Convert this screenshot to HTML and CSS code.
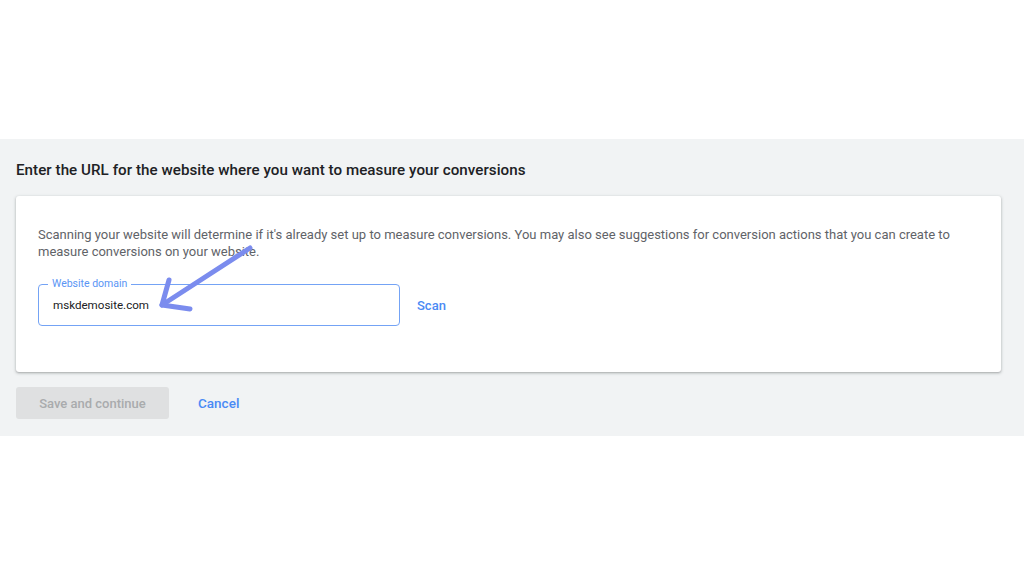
FILE: index.html
```html
<!DOCTYPE html>
<html>
<head>
<meta charset="utf-8">
<link rel="stylesheet" href="styles.css">
</head>
<body>
<div class="page">
  <div class="top-space"></div>
  <section class="band">
    <h2 class="title">Enter the URL for the website where you want to measure your conversions</h2>
    <div class="card">
      <p class="desc">Scanning your website will determine if it's already set up to measure conversions. You may also see suggestions for conversion actions that you can create to measure conversions on your website.</p>
      <div class="field-row">
        <div class="field">
          <span class="field-label">Website domain</span>
          <span class="field-value">mskdemosite.com</span>
        </div>
        <span class="scan">Scan</span>
      </div>
    </div>
    <div class="actions">
      <span class="btn-disabled">Save and continue</span>
      <span class="btn-text">Cancel</span>
    </div>
  </section>
  <svg class="arrow" width="1024" height="576" viewBox="0 0 1024 576">
    <g fill="none" stroke="#7b8cee" stroke-width="5" stroke-linecap="round" stroke-linejoin="round">
      <path d="M250 248 L162 305"/>
      <path d="M169 280 L162 305 L190 309"/>
    </g>
  </svg>
</div>
</body>
</html>
```

FILE: styles.css
```css
* { box-sizing: border-box; }
html, body { margin: 0; padding: 0; background: #fff; }
body { font-family: Roboto, "Noto Sans", "Liberation Sans", sans-serif; width: 1024px; height: 576px; overflow: hidden; }
.page { position: relative; width: 1024px; height: 576px; }
.top-space { height: 139px; }
.band {
  background: #f1f3f4;
  height: 297px;
  padding: 22px 23px 0 16px;
}
.title {
  margin: 0;
  font-size: 15.15px;
  font-weight: 500;
  color: #202124;
  line-height: 18px;
  letter-spacing: 0.05px;
}
.card {
  margin-top: 17px;
  width: 985px;
  height: 176px;
  background: #fff;
  border-radius: 3px;
  box-shadow: 0 1px 2px rgba(60,64,67,0.3), 0 1px 3px 1px rgba(60,64,67,0.12);
  padding: 30px 40px 0 22px;
}
.desc {
  margin: 0;
  font-size: 13px;
  line-height: 17px;
  color: #5f6368;
}
.field-row {
  margin-top: 24px;
  display: flex;
  align-items: center;
  gap: 17px;
}
.field {
  position: relative;
  width: 362px;
  height: 42px;
  flex: none;
  border: 1.5px solid #74a3f5;
  border-radius: 4px;
  display: flex;
  align-items: center;
  padding-left: 14px;
}
.field-label {
  position: absolute;
  top: -8px;
  left: 9px;
  background: #fff;
  padding: 0 4px;
  font-size: 10.5px;
  line-height: 14px;
  color: #5a95f5;
}
.field-value {
  font-size: 11.6px;
  color: #202124;
}
.scan {
  font-size: 13px;
  font-weight: 500;
  color: #4a8af4;
}
.actions {
  margin-top: 15px;
  display: flex;
  align-items: center;
  gap: 29px;
}
.btn-disabled {
  width: 153px;
  height: 32px;
  border-radius: 3px;
  background: #dfe0e1;
  color: #a9abad;
  font-size: 13px;
  font-weight: 500;
  display: flex;
  align-items: center;
  justify-content: center;
}
.btn-text {
  font-size: 13.5px;
  font-weight: 500;
  color: #4a8af4;
}
.arrow { position: absolute; left: 0; top: 0; pointer-events: none; }
```
